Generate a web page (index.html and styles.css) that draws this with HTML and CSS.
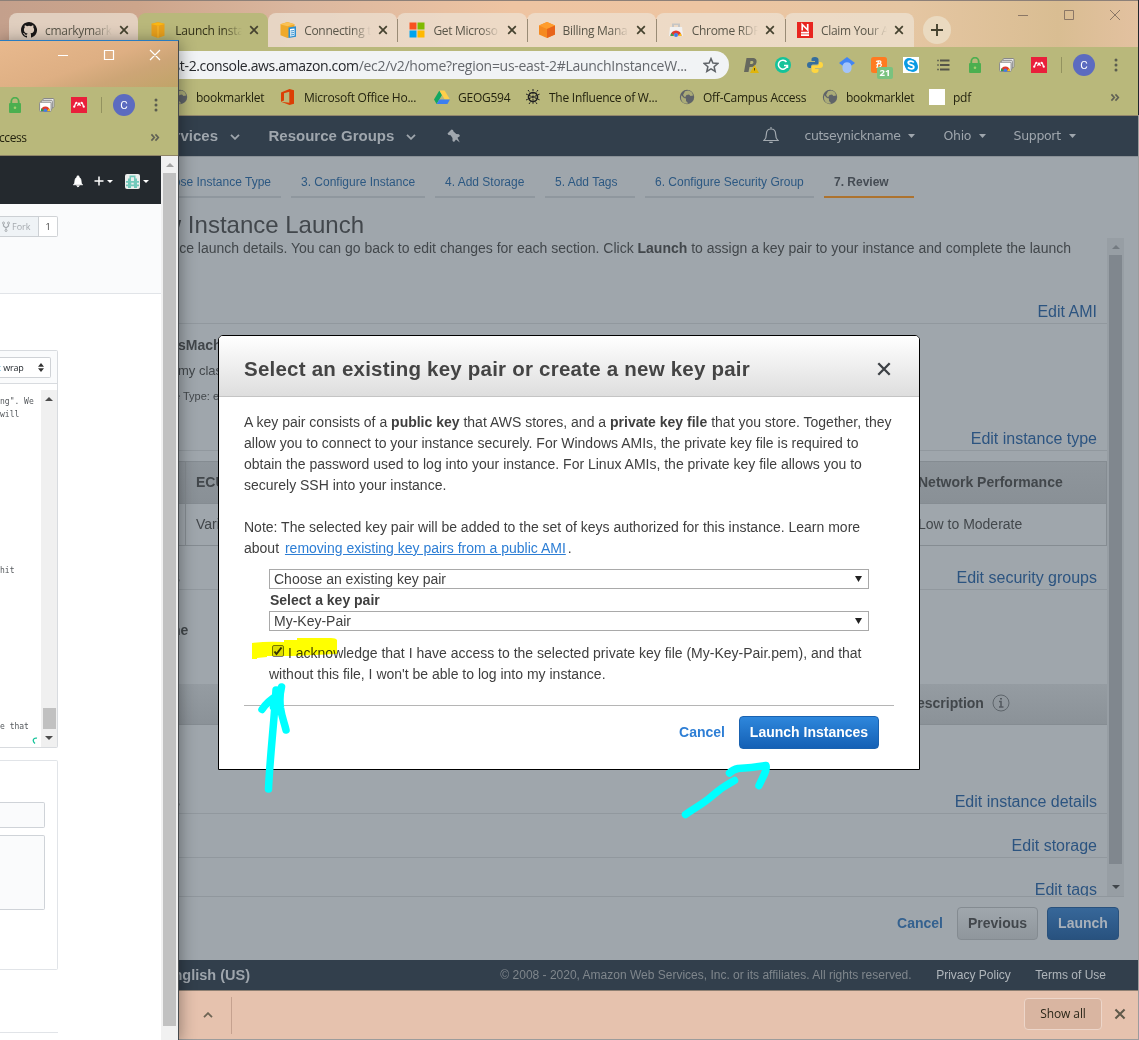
FILE: index.html
```html
<!DOCTYPE html>
<html lang="en">
<head>
<meta charset="utf-8">
<title>Launch instance wizard</title>
<link rel="stylesheet" href="styles.css">
</head>
<body>
<svg width="0" height="0" class="defs">
  <defs>
    <symbol id="i-lock" viewBox="0 0 16 16"><path d="M4.3 7V4.6a3.7 3.9 0 0 1 7.4 0V7" fill="none" stroke="#4caf50" stroke-width="1.8"/><rect x="2" y="6" width="12" height="10" rx="1" fill="#4caf50"/><circle cx="8" cy="10.8" r="1.3" fill="#a5d06f"/></symbol>
    <symbol id="i-rdp" viewBox="0 0 16 16"><rect x="4" y="1.5" width="11" height="9" rx="1" fill="#eee" stroke="#888"/><rect x="2.3" y="3.3" width="11" height="9" rx="1" fill="#eee" stroke="#888"/><rect x=".6" y="5.2" width="11.5" height="9.3" rx="1" fill="#fff" stroke="#888"/><path d="M1.8 14a4.6 4.6 0 0 1 9.2 0h-3a1.6 1.6 0 0 0-3.2 0z" fill="#e33b2e"/><path d="M1.8 14a4.6 4.6 0 0 1 1-2.9l2 2.9z" fill="#2aa14b"/><path d="M11 14a4.6 4.6 0 0 0-1-2.8L8 14z" fill="#fbc116"/><circle cx="6.4" cy="13.2" r="1.7" fill="#3f7ee8"/></symbol>
    <symbol id="i-mendeley" viewBox="0 0 16 16"><path fill="#e9203b" d="M0 0h16v16H0z"/><path d="M3.500 9.500C4.300 9 3.800 6 5.200 6M12.500 9.500c-.8-.5-.3-3.500-1.700-3.500M6.700 9C6.900 7.500 7 6.800 8 6.800S9.100 7.500 9.300 9" fill="none" stroke="#fff" stroke-width="1.300"/><circle cx="8" cy="6.800" r="1.300" fill="#fff"/><circle cx="5.400" cy="5.800" r="1.100" fill="#fff"/><circle cx="10.600" cy="5.800" r="1.100" fill="#fff"/><circle cx="3.200" cy="9.700" r="1.100" fill="#fff"/><circle cx="12.800" cy="9.700" r="1.100" fill="#fff"/></symbol>
    <symbol id="i-globe" viewBox="0 0 16 16"><circle cx="8" cy="8" r="7.200" fill="#5f6368"/><path d="M2.300 6.300 5 9l2 .5v2.600l1.600 1.500.2 1.200C4 15 1 11.500 2.300 6.300zM6 2.200l3.400-.8c3 .6 4.300 2.600 4.700 5.100L11.500 7 10 5.500 7.500 6 6 8.400 4 6z" fill="#b9b87b" opacity=".85"/></symbol>
    <symbol id="i-x" viewBox="0 0 10 10"><path d="m1.200 1.200 7.600 7.600m0-7.600L1.200 8.800" fill="none" stroke="currentColor" stroke-width="1.700"/></symbol>
    <symbol id="i-more" viewBox="0 0 10 10"><path d="m1 1.500 3.200 3.500L1 8.500M5.500 1.500 8.700 5 5.500 8.500" fill="none" stroke="currentColor" stroke-width="1.800"/></symbol>
    <symbol id="i-chev" viewBox="0 0 10 6"><path d="m1 .8 4 4 4-4" fill="none" stroke="currentColor" stroke-width="1.800"/></symbol>
    <symbol id="i-tri" viewBox="0 0 8 4" preserveAspectRatio="none"><path d="M0 0h8L4 4z" fill="currentColor"/></symbol>
  </defs>
</svg>
<div class="desktop">

<section class="browser">
  <header class="tabstrip">
    <div class="tab"><svg class="fav" viewBox="0 0 16 16"><path fill="#191717" d="M8 0C3.580 0 0 3.580 0 8c0 3.540 2.290 6.530 5.470 7.590.4.070.55-.17.55-.38 0-.19-.01-.82-.01-1.490-2.010.37-2.530-.49-2.690-.94-.09-.23-.48-.94-.82-1.130-.28-.15-.68-.52-.01-.53.63-.01 1.080.58 1.230.82.720 1.210 1.870.87 2.330.66.070-.52.28-.87.51-1.070-1.780-.2-3.640-.89-3.640-3.950 0-.87.31-1.590.82-2.150-.08-.2-.36-1.020.080-2.120 0 0 .67-.21 2.200.82a7.600 7.600 0 0 1 4 0c1.530-1.040 2.200-.82 2.200-.82.44 1.100.16 1.920.08 2.120.51.560.82 1.270.82 2.150 0 3.070-1.870 3.750-3.650 3.950.29.250.54.730.54 1.480 0 1.070-.01 1.930-.01 2.200 0 .21.15.46.55.38A8 8 0 0 0 8 0z"/></svg><span class="t">cmarkymark/</span><svg class="tx"><use href="#i-x"/></svg></div>
    <div class="tab on"><svg class="fav" viewBox="0 0 16 16"><path d="m8 0 6.500 1.800v12L8 16l-6.500-2.200v-12z" fill="#eaa11c"/><path d="m1 2 7 1.700L15 2 8 .5z" fill="#fcb913"/><path d="M8 4v12" stroke="#fcbd30"/></svg><span class="t">Launch insta</span><svg class="tx"><use href="#i-x"/></svg></div>
    <div class="tab"><svg class="fav" viewBox="0 0 16 16"><path d="m7.500 0 7 2.200v11L7.500 16 .5 13.200v-11z" fill="#efa92b"/><path d="m0 2.300 7.500 2 7.500-2-7.500-2z" fill="#fbc255"/><path d="m8.500 5.500 7.500-1.200v10.400L8.500 16z" fill="#2e8fd0"/><path d="m10 7 4.500-.6v7.400L10 14.500z" fill="#fff"/><path d="m10.500 9 3.500-.4m-3.500 2.400 3.500-.4m-3.500 2.400 3.500-.4" stroke="#2e8fd0"/></svg><span class="t">Connecting t</span><svg class="tx"><use href="#i-x"/></svg></div>
    <div class="tab sep"><svg class="fav" viewBox="0 0 16 16"><path fill="#f8521f" d="M.5.500h7v7h-7z"/><path fill="#7fba00" d="M8.500.500h7v7h-7z"/><path fill="#00a4ef" d="M.5 8.500h7v7h-7z"/><path fill="#ffb900" d="M8.500 8.500h7v7h-7z"/></svg><span class="t">Get Microso</span><svg class="tx"><use href="#i-x"/></svg></div>
    <div class="tab sep"><svg class="fav" viewBox="0 0 16 16"><path fill="#f58a21" d="M8 0 0 3.500v9L8 16l8-3.500v-9z"/><path fill="#ff9d2e" d="m8 0 8 3.500L8 7 0 3.500z"/><path fill="#e8641b" d="m8 7 8-3.500v9L8 16z"/></svg><span class="t">Billing Mana</span><svg class="tx"><use href="#i-x"/></svg></div>
    <div class="tab sep"><svg class="fav" viewBox="0 0 16 16"><path fill="#c5c5c5" d="M4 1.500h8V5h-2V3H6v2H4z"/><path fill="#f1f1f1" d="M2 5h12l1 9H1z"/><path fill="#e23a2e" d="M2.500 14a5.500 5.500 0 0 1 11 0h-3a2.500 2.500 0 0 0-5 0z" /><path fill="#2fa84f" d="M2.500 14a5 5 0 0 1 1-3L6 14z"/><path fill="#fbc116" d="M13.500 14a5 5 0 0 0-1-3L10 14z"/><circle cx="8" cy="13" r="2" fill="#3f7ee8"/></svg><span class="t">Chrome RDP</span><svg class="tx"><use href="#i-x"/></svg></div>
    <div class="tab sep"><svg class="fav" viewBox="0 0 16 16"><path fill="#e8251f" d="M0 0h16v16H0z"/><path d="M5.200 8.500v-6l5.500 5.500V2M4 10.700h8M4 13.200h8" fill="none" stroke="#fff" stroke-width="1.700"/></svg><span class="t">Claim Your A</span><svg class="tx"><use href="#i-x"/></svg></div>
    <div class="newtab"><svg viewBox="0 0 12 12"><path d="M6 0v12M0 6h12" stroke="#45422f" stroke-width="1.900"/></svg></div>
    <svg class="winctl" viewBox="0 0 104 12"><path d="M0 6.500h10M46.500 1.500h9v9h-9zM92 1l10 10m0-10L92 11" fill="none" stroke="#8b7766"/></svg>
  </header>

  <div class="toolbar">
    <div class="omni"><span><b>us-east-2.console.aws.amazon.com</b>/ec2/v2/home?region=us-east-2#LaunchInstanceW...</span><svg class="star" viewBox="0 0 16 16"><path d="m8 1.600 1.900 4.500 4.900.4-3.700 3.200 1.100 4.700L8 11.900l-4.200 2.500 1.100-4.700L1.200 6.500l4.900-.4z" fill="none" stroke="#5f6368" stroke-width="1.500"/></svg></div>
    <div class="exts">
      <i><svg viewBox="0 0 16 16"><path d="M1 15 3.500 1H9c4 0 5 2 4.500 4.500S11 10 8 10H6.500l-1 5z" fill="#66685e"/><path d="M7.500 4h1.800c1.500 0 1.500 3-.5 3H7z" fill="#b9b87b"/><path d="m11.500 8 4.500 8H7z" fill="#e0b50c"/><path d="M11.500 11v2.500" stroke="#5b4a10"/></svg></i>
      <i><svg viewBox="0 0 16 16"><circle cx="8" cy="8" r="8" fill="#15c39a"/><path d="M11.500 5A4.500 4.500 0 1 0 12 9.500M9 8.500h3.500V11" fill="none" stroke="#fff" stroke-width="1.500"/></svg></i>
      <i><svg viewBox="0 0 16 16"><path d="M8 0C5 0 4.500 1 4.500 2.500V4H8v1H3C1 5 0 6 0 8s1 3 2.500 3H4V9.500C4 8 5 7.500 6.500 7.500H10c1 0 1.500-1 1.500-2v-3C11.500 1 10 0 8 0z" fill="#346d9d"/><path d="M8 16c3 0 3.500-1 3.500-2.500V12H8v-1h5c2 0 3-1 3-3s-1-3-2.500-3H12v1.500C12 8 11 8.500 9.500 8.500H6c-1 0-1.500 1-1.500 2v3C4.500 15 6 16 8 16z" fill="#ffd63f"/></svg></i>
      <i><svg viewBox="0 0 16 16"><path d="m8 0 8 6-8 6-8-6z" fill="#4285f4"/><path d="M3.500 8.500a4.700 4.700 0 0 1 9 0v3a4.500 4.500 0 0 1-9 0z" fill="#a3c4fa"/></svg></i>
      <i class="honey"><svg viewBox="0 0 16 16"><rect width="16" height="16" rx="2.500" fill="#ff7a21"/><path d="M5 4.500c2-1 5-1 5 .5S7 6.500 6.500 7C10 6 11 7.500 10 9S7 10.500 6 10.500L7.500 4" fill="none" stroke="#fff" stroke-width="1.200"/></svg><em>21</em></i>
      <i><svg viewBox="0 0 16 16"><path fill="#fff" d="M0 0h16v16H0z"/><rect x="1" y="1" width="10" height="10" rx="5" fill="#0a9be3"/><rect x="5" y="5" width="10" height="10" rx="5" fill="#0a9be3"/><circle cx="8" cy="8" r="6.300" fill="#0a9be3"/><path d="M10.800 5.500C9 3.500 5 4 5.200 6c.3 2.200 5.600 1.500 5.600 3.900C10.800 12.300 7 12.400 5 10.300" fill="none" stroke="#fff" stroke-width="1.800"/></svg></i>
      <i><svg viewBox="0 0 16 16"><path d="M5 3.500h9.500M5 8h9.500M5 12.500h9.500" stroke="#55554a" stroke-width="2"/><path d="M2 3.500h2M2 8h2M2 12.500h2" stroke="#6c6c58" stroke-width="1.500"/></svg></i>
      <i><svg><use href="#i-lock"/></svg></i><i><svg><use href="#i-rdp"/></svg></i><i><svg><use href="#i-mendeley"/></svg></i>
      <u></u><b>C</b><svg class="dots" viewBox="0 0 4 14"><circle cx="2" cy="2" r="1.500"/><circle cx="2" cy="7" r="1.500"/><circle cx="2" cy="12" r="1.500"/></svg>
    </div>
  </div>

  <nav class="bookmarks">
    <a class="w108"><svg><use href="#i-globe"/></svg>bookmarklet</a>
    <a class="w154"><svg viewBox="0 0 16 16"><path fill="#dc3e05" d="M1 3.500 9.500 0 14 1.300v13.400L9.500 16 1 12.800l8.300 1V2.800L4 4.200v7.400l-3 1.200z"/></svg>Microsoft Office Ho...</a>
    <a class="w91"><svg viewBox="0 0 16 16"><path fill="#11a861" d="M5.400 1.500 0 10.500 2.600 15 8 6z"/><path fill="#ffcf4a" d="M5.400 1.500h5.200l5.400 9h-5.300z"/><path fill="#3d7ff0" d="M5.300 10.500H16L13.400 15H2.600z"/></svg>GEOG594</a>
    <a class="w154"><svg viewBox="0 0 16 16"><circle cx="8" cy="8" r="4.500" fill="none" stroke="#222" stroke-width="1.600"/><path d="M8 0v16M1 5l14 6M1 11l14-6M3 1l3 4m7-4-3 4M4 15l2-3m6 3-2-3M5.500 8h5" stroke="#222" fill="none" stroke-dasharray="2 1.200"/></svg>The Influence of W...</a>
    <a class="w143"><svg><use href="#i-globe"/></svg>Off-Campus Access</a>
    <a class="w107"><svg><use href="#i-globe"/></svg>bookmarklet</a>
    <a class="pdf"><i></i>pdf</a>
    <svg class="more"><use href="#i-more"/></svg>
  </nav>

  <nav class="awsnav">
    <span class="n1">Services<svg><use href="#i-chev"/></svg></span>
    <span class="n2">Resource Groups<svg><use href="#i-chev"/></svg></span>
    <svg class="pin" viewBox="0 0 14 14"><path d="m.5 4.500 4-4L6 1l.5 1.500L9.300 5l2.700.3L13 7l-2.500 1.800 2.300 4.700L9 10.500 7 13 5.500 12V9L3.600 6.200 1.500 6z" fill="#a0a7ae"/></svg>
    <svg class="bell" viewBox="0 0 16 17"><path d="M1 13.500h14c-2-1.800-2.400-3.500-2.400-6.500C12.600 3.600 10.500 2 8 2S3.400 3.600 3.400 7c0 3-.4 4.700-2.400 6.500zM8 0v2M6.300 15.300h3.400" fill="none" stroke="#a3aab0" stroke-width="1.200"/></svg>
    <span class="n3">cutseynickname<svg><use href="#i-tri"/></svg></span>
    <span class="n4">Ohio<svg><use href="#i-tri"/></svg></span>
    <span class="n5">Support<svg><use href="#i-tri"/></svg></span>
  </nav>

  <main class="wizard">
    <ol class="steps">
      <li class="s2">2. Choose Instance Type</li><li class="s3">3. Configure Instance</li><li class="s4">4. Add Storage</li><li class="s5">5. Add Tags</li><li class="s6">6. Configure Security Group</li><li class="s7">7. Review</li>
    </ol>
    <h1>Step 7: Review Instance Launch</h1>
    <div class="scroller">
      <div class="content">
        <p class="lead">Please review your instance launch details. You can go back to edit changes for each section. Click <b>Launch</b> to assign a key pair to your instance and complete the launch</p>
        <div class="sec a">Edit AMI</div>
        <div class="ami"><b>sMach</b><span>my clas</span><small>e Type: e</small></div>
        <div class="sec b">Edit instance type</div>
        <div class="table">
          <div class="tr th"><span>ECUs</span><span>Network Performance</span></div>
          <div class="tr"><span>Variable</span><span>Low to Moderate</span></div>
        </div>
        <div class="sec c"><span>s</span>Edit security groups</div>
        <div class="name">ne</div>
        <div class="rules">escription <svg viewBox="0 0 18 18"><circle cx="9" cy="9" r="8" fill="none" stroke="#5e656b"/><path d="M7 7.500h2V13M7 13h4.500M8 4.800h2" fill="none" stroke="#555b61" stroke-width="1.600"/></svg></div>
        <div class="sec d"><span>s</span>Edit instance details</div>
        <div class="sec e">Edit storage</div>
        <div class="sec f">Edit tags</div>
      </div>
      <div class="sbar"><svg class="up"><use href="#i-tri"/></svg><i></i><svg><use href="#i-tri"/></svg></div>
    </div>
    <div class="actions"><a>Cancel</a><button class="prev">Previous</button><button class="launch">Launch</button></div>
  </main>
  <footer class="awsfoot"><b>English (US)</b><span>© 2008 - 2020, Amazon Web Services, Inc. or its affiliates. All rights reserved.</span><a>Privacy Policy</a><a>Terms of Use</a></footer>
  <div class="downloads"><svg class="chev"><use href="#i-chev"/></svg><i></i><button>Show all</button><svg class="dx"><use href="#i-x"/></svg></div>
</section>
<div class="edge"></div>

<section class="modal">
  <header><h2>Select an existing key pair or create a new key pair</h2><svg viewBox="0 0 14 14"><path d="m1.300 1.300 11.400 11.400m0-11.400L1.300 12.700" stroke="#3d4145" stroke-width="2.300"/></svg></header>
  <div class="mbody">
    <p>A key pair consists of a <b>public key</b> that AWS stores, and a <b>private key file</b> that you store. Together, they<br>allow you to connect to your instance securely. For Windows AMIs, the private key file is required to<br>obtain the password used to log into your instance. For Linux AMIs, the private key file allows you to<br>securely SSH into your instance.</p>
    <p>Note: The selected key pair will be added to the set of keys authorized for this instance. Learn more<br>about <a>removing existing key pairs from a public AMI</a>.</p>
    <div class="form">
      <div class="select">Choose an existing key pair<svg><use href="#i-tri"/></svg></div>
      <label>Select a key pair</label>
      <div class="select">My-Key-Pair<svg><use href="#i-tri"/></svg></div>
      <div class="ack"><span class="cb"><svg viewBox="0 0 10 10"><path d="m1.500 5.500 2 2.500L8.500 1.500" fill="none" stroke="#333" stroke-width="2"/></svg></span>I acknowledge that I have access to the selected private key file (My-Key-Pair.pem), and that<br>without this file, I won't be able to log into my instance.</div>
    </div>
    <div class="mfoot"><a>Cancel</a><button>Launch Instances</button></div>
  </div>
</section>

<section class="front">
  <div class="ftitle"><svg viewBox="0 0 104 12"><path d="M0 6.500h10M46.500 1.500h9v9h-9zM92 1l10 10m0-10L92 11" fill="none" stroke="#fff" stroke-width="1.200"/></svg></div>
  <div class="exts fexts">
    <i><svg><use href="#i-lock"/></svg></i><i><svg><use href="#i-rdp"/></svg></i><i><svg><use href="#i-mendeley"/></svg></i>
    <u></u><b>C</b><svg class="dots" viewBox="0 0 4 14"><circle cx="2" cy="2" r="1.500"/><circle cx="2" cy="7" r="1.500"/><circle cx="2" cy="12" r="1.500"/></svg>
  </div>
  <div class="fmarks"><span>ccess</span><svg class="more"><use href="#i-more"/></svg></div>
  <div class="fpage">
    <div class="gh">
      <div class="ghbar">
        <svg class="gbell" viewBox="0 0 12 14"><path d="M1 10.500c1.500-1 1.500-2 1.700-4.500C3 3.500 4.300 2.500 6 2.500S9 3.500 9.300 6c.2 2.500.2 3.500 1.700 4.500zM5 1h2v2H5zM4.500 11.500h3L6 13z" fill="#fff" stroke="#fff" stroke-width=".8"/></svg>
        <svg class="plus" viewBox="0 0 10 10"><path d="M5 .5v9M.5 5h9" stroke="#fff" stroke-width="1.500"/></svg>
        <svg class="tri"><use href="#i-tri"/></svg>
        <svg class="ava" viewBox="0 0 15 15"><rect width="15" height="15" rx="2" fill="#eceeed"/><path d="M4.500 1.500h6v3h-6zM3 4.500h3v9.500H3zm6 0h3v9.500H9zM6 7h3v5H6zM1 7h13v1.800H1zm0 3.500h13v1.700H1z" fill="#72c9bb"/><path d="M6 3.200h3v2H6zM6.300 8.800h2.400v1.700H6.300z" fill="#eceeed"/></svg>
        <svg class="tri"><use href="#i-tri"/></svg>
      </div>
      <div class="repo"><span class="fork"><svg viewBox="0 0 8 11"><path d="M1.500 3v2L4 7l2.500-2V3M4 7v2" fill="none" stroke="#a5aaaf" stroke-width="1.200"/><g fill="#fafbfc" stroke="#a5aaaf"><circle cx="1.500" cy="2" r="1"/><circle cx="6.500" cy="2" r="1"/><circle cx="4" cy="9.500" r="1"/></g></svg>Fork</span><span class="cnt">1</span></div>
      <div class="editor">
        <div class="ehead"><span class="wrap"><span class="c">t</span>&nbsp;wrap<svg viewBox="0 0 6 9"><path d="M0 3.700h6L3 0zM0 5.300h6L3 9z" fill="#333"/></svg></span></div>
        <div class="ebody">
          <div class="code"><pre>ng". We
will</pre><pre class="p2">hit</pre><pre class="p3">e that</pre><svg class="gram" viewBox="0 0 6 8"><path d="M5 1.200C1 .5 0 4 3 6.500" fill="none" stroke="#15c39a" stroke-width="1.300"/></svg></div>
          <div class="esb"><svg class="up"><use href="#i-tri"/></svg><i></i><svg><use href="#i-tri"/></svg></div>
        </div>
      </div>
      <div class="commit"><div class="in1"></div><div class="in2"></div></div>
      <div class="rule"></div>
    </div>
    <div class="fsb"><svg class="up"><use href="#i-tri"/></svg><i></i></div>
  </div>
</section>

<svg class="marker" viewBox="0 0 1139 1040" width="1139" height="1040">
  <path d="M252 643q14-2 32-1v-2h13v-2h34q5 0 6 2v14l-45 2h-25v1l-10 1v1h-5z"/>
</svg>
<svg class="ink" viewBox="0 0 1139 1040" width="1139" height="1040">
  <path d="M281.500 687c-2 8-2 13-1 21 1.500 10 4 15 5.500 22M262 709.500q6-9 17-15M276 690c-2 34-6 66-7.500 99M273.500 707l3-14"/>
  <path d="M685.500 814.500C696 807 703 804 712 796Q722 787 734.500 780.500M729.500 773Q733 769.500 738 768.500C748 768 757 767 766 765.500Q767 769 763.500 776L759 785.500"/>
</svg>
</div>
</body>
</html>
```
FILE: styles.css
```css
* { box-sizing: border-box; }
body { margin: 0; overflow: hidden; font-family: "Liberation Sans", Arial, sans-serif; color: #444; }
.defs { position: absolute; }
.desktop { position: relative; width: 1139px; height: 1040px; overflow: hidden; background: #9c9c9c; }
svg { display: block; flex: none; }
button { font: inherit; margin: 0; padding: 0; }
.browser { position: absolute; left: 0; top: 0; width: 1138px; height: 1039px; display: flex; flex-direction: column; }
.edge { position: absolute; left: 1138px; top: 0; width: 1px; height: 115px; background: #22262c; }

/* tab strip */
.tabstrip { height: 47px; flex: none; display: flex; align-items: flex-start; padding: 12px 0 0 9px; border-top: 1px solid #8d8078; position: relative;
  background: linear-gradient(90deg, #c4a08c 0, #cda58b 12%, #dbb79f 26%, #eec4a2 45%, #edc5a2 62%, #e5c6a2 80%, #d9bd92 93%, #e3c1a0 100%); }
.tab { width: 129.200px; height: 34px; flex: none; display: flex; align-items: center; padding-left: 12px; border-radius: 8px 8px 0 0; background: rgba(238,229,215,.68); position: relative;
  font: 12px "Open Sans", sans-serif; color: #5a5649; }
.tab.on { background: #b9b87b; color: #333118; width: 130px; }
.tab.sep { border-left: 1px solid #a0907c; border-image: linear-gradient(transparent 20%, #998b76 20%, #998b76 82%, transparent 82%) 1; padding-left: 11px; }
.fav { width: 16px; height: 16px; margin-right: 8px; }
.t { width: 66.500px; overflow: hidden; white-space: nowrap; letter-spacing: -.3px; -webkit-mask-image: linear-gradient(90deg, #000 72%, transparent); mask-image: linear-gradient(90deg, #000 72%, transparent); }
.on .t { letter-spacing: -.2px; margin-left: 1px; }
.tx { width: 10px; height: 10px; margin-left: 7px; color: #45422f; }
.newtab { width: 28px; height: 28px; border-radius: 50%; background: #eadac0; margin: 3px 0 0 9px; display: grid; place-items: center; }
.newtab svg { width: 12px; height: 12px; }
.winctl { width: 104px; height: 12px; margin: -4px 0 0 67px; }

/* toolbar */
.toolbar { height: 36px; flex: none; background: #b9b87b; display: flex; align-items: center; }
.omni { width: 729px; height: 28px; border-radius: 0 14px 14px 0; background: #f1f3f5; display: flex; align-items: center; justify-content: flex-end; padding-right: 10px; font: 14px "Open Sans", sans-serif; color: #65686d; white-space: nowrap; letter-spacing: -.28px; }
.omni b { font-weight: 400; color: #26282c; letter-spacing: -.35px; }
.star { width: 16px; height: 16px; margin-left: 16px; }
.exts { display: flex; align-items: center; }
.toolbar .exts { margin-left: 6px; }
.exts i { width: 32px; height: 28px; display: grid; place-items: center; flex: none; position: relative; }
.exts i svg { width: 16px; height: 16px; }
.exts u { width: 1px; height: 16px; background: #93925f; margin: 0 11px 0 6px; }
.exts b { width: 22px; height: 22px; border-radius: 50%; background: #5c6bc0; color: #fff; font: 11.500px/22px Roboto, sans-serif; text-align: center; }
.dots { width: 4px; height: 14px; margin-left: 19px; fill: #5b5d50; }
.honey em { position: absolute; left: 14px; top: 16px; width: 16px; height: 12px; background: #7ac27f; border-radius: 2px; color: #fff; font: bold 9.500px/12px "Open Sans", sans-serif; text-align: center; }
.bookmarks { height: 33px; flex: none; background: #b9b87b; border-bottom: 1px solid #92866c; display: flex; align-items: center; padding: 0 0 4px 172px; font: 12px "Open Sans", sans-serif; letter-spacing: -.25px; color: #24230f; white-space: nowrap; }
.bookmarks a { display: flex; align-items: center; flex: none; gap: 8px; }
.bookmarks a svg { width: 16px; height: 16px; }
.w108 { width: 108px; } .w154 { width: 154px; } .w91 { width: 91px; } .w143 { width: 143px; } .w107 { width: 107px; }
.bookmarks .pdf { width: 181px; }
.pdf i { width: 16px; height: 16px; background: #fff; }
.more { width: 10px; height: 9px; color: #5f6054; }

/* console navigation */
.awsnav { height: 40px; flex: none; background: #323f4c; display: flex; align-items: center; color: #9fa6ad; font: bold 15px "Liberation Sans", sans-serif; padding-bottom: 1px; }
.awsnav span { display: flex; align-items: center; flex: none; white-space: nowrap; }
.awsnav .n1 { width: 240px; justify-content: flex-end; gap: 12px; }
.n1 svg, .n2 svg { width: 10px; height: 6px; margin-top: 3px; }
.awsnav .n2 { margin-left: 28.500px; gap: 12px; width: 180px; }
.pin { width: 14px; height: 14px; margin-left: -2px; }
.bell { width: 16px; height: 17px; margin-left: 302px; }
.awsnav .n3, .awsnav .n4, .awsnav .n5 { font: 400 12.500px "DejaVu Sans", sans-serif; gap: 8px; letter-spacing: -.45px; }
.n3 svg, .n4 svg, .n5 svg { width: 7px; height: 4px; }
.awsnav .n3 { margin-left: 26px; width: 139px; }
.awsnav .n4 { width: 70px; }
.awsnav .n4, .awsnav .n5 { letter-spacing: -.3px; }

/* wizard page */
.wizard { height: 804px; flex: none; background: #9fa6ac; display: flex; flex-direction: column; border-top: 1px solid #8a9197; }
.steps { list-style: none; margin: 0; padding: 10px 0 0; height: 42px; display: flex; gap: 10px; font-size: 12px; color: #2c5882; flex: none; }
.steps li { height: 31px; line-height: 30px; border-bottom: 2px solid #8f979e; padding: 0 10px; white-space: nowrap; flex: none; }
.steps .s2 { width: 281px; text-align: right; } .s3 { width: 134px; } .s4 { width: 100px; } .s5 { width: 90px; } .s6 { width: 169px; }
.steps .s7 { width: 90px; border-color: #ad732f; color: #454c54; font-weight: bold; }
h1 { margin: 0; width: 364px; text-align: right; font-weight: 400; font-size: 24px; line-height: 31px; padding-top: 10px; height: 39px; flex: none; white-space: nowrap; color: #42474c; }
.scroller { height: 659px; flex: none; display: flex; margin-right: 14px; border-bottom: 1px solid #90979d; }
.content { width: 1107px; overflow: hidden; color: #42474b; font-size: 14px; }
.lead { margin: 0; padding: 0 36px 0 0; height: 21px; line-height: 20px; font-size: 14px; display: block; white-space: nowrap; direction: rtl; unicode-bidi: plaintext; text-align: right; }
.sec { border-bottom: 1px solid #91989e; font-size: 16px; color: #2c5480; display: flex; align-items: flex-end; justify-content: flex-end; padding: 0 10px 2px 172px; }
.sec span { margin-right: auto; color: #42474b; }
.a { height: 65px; } .ami { height: 124px; }
.ami { display: flex; flex-direction: column; padding: 10px 0 0 178px; line-height: 22px; }
.ami b { font-size: 14px; } .ami span { line-height: 30px; height: 28px; font-size: 13px; } .ami small { font-size: 11px; line-height: 24px; margin-left: -4px; }
.sec.b { height: 0; overflow: visible; }
.table { margin: 10px 0 0; border: 1px solid #858c92; font-size: 14px; height: 85px; }
.tr { height: 40px; display: flex; align-items: center; }
.th { background: linear-gradient(#8f969c, #899096); border-bottom: 1px solid #858c92; font-weight: bold; height: 42px; padding-bottom: 1px; }
.tr span:first-child { margin-left: 184px; width: 733px; padding-left: 10px; border-left: 1px solid #858c92; line-height: 41px; }
.sec.c { height: 44px; }
.name { height: 94px; padding: 32px 0 0 172px; font-weight: bold; width: 300px; }
.rules { height: 41px; background: linear-gradient(#959ca2, #8b9298); border-bottom: 1px solid #858c92; display: flex; align-items: center; gap: 8px; padding: 0 0 2px 917px; font-weight: bold; }
.rules svg { width: 18px; height: 18px; }
.sec.d { height: 89px; }
.sec.e { height: 44px; }
.sec.f { height: 44px; border: 0; padding-bottom: 3px; }
.sbar { width: 17px; background: #979ea4; display: flex; flex-direction: column; align-items: center; padding-top: 7px; height: 658px; }
.sbar svg { width: 8px; height: 4px; color: #41464b; margin-top: 21px; }
.sbar svg.up { transform: rotate(180deg); color: #747b81; margin: 0; }
.sbar i { width: 13px; height: 609px; background: #80878e; margin-top: 6px; flex: none; }
.actions { display: flex; justify-content: flex-end; align-items: center; padding: 0 19px 0 0; height: 53px; font-weight: bold; font-size: 14px; }
.actions a { color: #34618f; margin-right: 14px; }
.actions button { height: 33px; border-radius: 4px; padding-bottom: 2px; }
.actions a { padding-bottom: 1px; }
.prev { width: 81px; border: 1px solid #848b91; background: linear-gradient(#a0a7ad, #8f969c); color: #42474c; margin-right: 9px; }
.launch { width: 72px; border: 1px solid #29517c; background: linear-gradient(#376799, #28527f); color: #a9b1ba; }
.awsfoot { height: 30px; flex: none; background: #323f4c; display: flex; align-items: center; justify-content: flex-end; padding-right: 32px; font-size: 12px; color: #7f868c; white-space: nowrap; }
.awsfoot b { font-size: 14.500px; color: #9fa6ad; margin-right: auto; width: 250px; text-align: right; }
.awsfoot a { color: #b0b6bb; margin-left: 24.500px; }
.downloads { height: 49px; flex: none; background: #e6c2ae; border-top: 1px solid #8f8073; display: flex; align-items: center; }
.chev { width: 10px; height: 6px; transform: rotate(180deg); margin-left: 203px; color: #6d6454; }
.downloads i { width: 1px; height: 37px; background: #c5a18f; margin-left: 18px; }
.downloads button { margin-left: auto; width: 78px; height: 32px; border: 1px solid #edd6ca; background: #d9b5a1; border-radius: 4px; font: 12px "Open Sans", sans-serif; letter-spacing: -.1px; color: #2a2618; margin-right: 12px; padding-bottom: 2px; margin-bottom: 2px; }
.dx { width: 12px; height: 12px; margin: 0 12px 2px 0; color: #5f594a; }

/* key pair dialog */
.modal { position: absolute; left: 218px; top: 335px; width: 702px; height: 435px; border: 1px solid #000; border-radius: 5px 5px 0 0; background: #fff; }
.modal header { height: 61px; border-bottom: 1px solid #c4c4c4; border-radius: 4px 4px 0 0; background: linear-gradient(#fff, #dedede); display: flex; align-items: center; justify-content: space-between; padding: 6px 28px 0 25px; }
.modal header svg { width: 14px; height: 14px; }
h2 { margin: 0; font-size: 20.500px; letter-spacing: .22px; white-space: nowrap; }
.mbody { padding: 15px 25px 0; font-size: 14px; line-height: 21px; white-space: nowrap; color: #3f3f3f; }
.mbody p { margin: 0 0 21px; }
.mbody p + p { margin: 0 0 10px; }
.mbody p a { color: #2d7ed5; text-decoration: underline; margin: 0 2px; }
.form { padding-left: 25px; }
.select { width: 600px; height: 20px; border: 1px solid #a9a9a9; line-height: 19px; padding: 0 6px 0 4px; display: flex; justify-content: space-between; align-items: center; }
.select svg { width: 7px; height: 6px; color: #222; }
.form label { display: block; font-weight: bold; height: 22px; line-height: 22px; padding-left: 1px; }
.ack { padding-top: 12px; }
.cb { display: inline-block; width: 12px; height: 12px; border: 1px solid #777; border-radius: 2px; background: #ddd; margin: 0 4px 0 3px; vertical-align: 1px; }
.cb svg { width: 10px; height: 10px; }
.mfoot { width: 650px; margin-top: 20px; border-top: 1px solid #b5b5b5; padding: 10px 15px 0 0; display: flex; justify-content: flex-end; align-items: center; font-weight: bold; }
.mfoot a { color: #2d7ed5; margin-right: 14px; }
.mfoot button { width: 140px; height: 33px; border: 1px solid #1a62b0; border-radius: 4px; color: #fff; background: linear-gradient(#2e87dc, #1460b5); }

/* overlapping window */
.front { position: absolute; left: -1px; top: 40px; width: 180px; height: 1001px; border: 1px solid #45494c; border-top-color: #297cc0; background: #fff; box-shadow: 0 2px 16px rgba(0,0,0,.42); overflow: hidden; display: flex; flex-direction: column; }
.ftitle { height: 46px; flex: none; background: linear-gradient(160deg, #e8b98e, #deaf83 50%, #cda576 72%, #c0a468); padding: 8px 0 0 58px; }
.ftitle svg { width: 104px; height: 12px; }
.fexts { height: 36px; flex: none; background: #b9b87b; }
.fexts i:first-child { margin-left: -1px; }
.fmarks { height: 33px; flex: none; background: #b9b87b; border-bottom: 1px solid #8f8467; display: flex; align-items: center; justify-content: space-between; padding: 0 18px 4px 0; font: 12px "Open Sans", sans-serif; letter-spacing: -.4px; color: #24230f; }
.fmarks span { margin-left: -1px; }
.fpage { display: flex; height: 885px; }
.gh { width: 161px; }
.ghbar { height: 48px; background: #24292e; display: flex; align-items: center; padding: 2px 0 0 72px; }
.gbell { width: 12px; height: 13px; } .plus { width: 10px; height: 10px; margin-left: 10px; }
.tri { width: 6px; height: 3px; color: #fff; margin-left: 3px; }
.ava { width: 15px; height: 15px; margin-left: 12px; } .ava + .tri { margin-left: 3px; }
.repo { height: 90px; background: #fafbfc; border-bottom: 1px solid #e1e4e8; display: flex; align-items: flex-start; padding-top: 12px; }
.fork { width: 39px; height: 21px; border: 1px solid #ccd0d4; border-left: 0; background: #eff3f6; display: flex; align-items: center; padding-left: 2px; gap: 2px; font: 9px/19px "Open Sans", sans-serif; color: #a5aaaf; }
.fork svg { width: 8px; height: 11px; }
.cnt { width: 19px; height: 21px; border: 1px solid #d0d3d6; border-left: 0; border-radius: 0 2px 2px 0; background: #fff; font: 9px/19px "Open Sans", sans-serif; text-align: center; color: #333; }
.editor { width: 58px; height: 398px; margin-top: 56px; border: 1px solid #d8dbdf; border-left: 0; border-radius: 0 2px 2px 0; }
.ehead { height: 33px; border-bottom: 1px solid #d8dbdf; background: #fafbfc; padding-top: 6px; }
.wrap { width: 51px; height: 21px; border: 1px solid #cfd2d6; border-left: 0; border-radius: 0 2px 2px 0; background: #fff; font: 9px "Open Sans", sans-serif; color: #24292e; display: flex; align-items: center; letter-spacing: -.2px; }
.wrap .c { color: #6bbfe5; margin-left: -2px; }
.wrap svg { width: 6px; height: 9px; margin: 0 6px 0 auto; }
.ebody { height: 363px; display: flex; padding-top: 6px; }
.code { width: 41px; padding-top: 5px; }
pre { margin: 0; font: 8px/13px "DejaVu Sans Mono", monospace; color: #54585c; height: 26px; }
.p2 { margin-top: 143px; height: 13px; } .p3 { margin-top: 143px; height: 13px; }
.gram { width: 6px; height: 8px; margin: 4px 0 0 32px; }
.esb { width: 16px; background: #f0f0f0; display: flex; flex-direction: column; align-items: center; padding-top: 7px; }
.esb svg { width: 8px; height: 4px; color: #4c4c4c; margin-top: 7px; }
.esb svg.up { transform: rotate(180deg); margin: 0; }
.esb i { width: 13px; height: 21px; background: #c1c1c1; margin-top: 307px; flex: none; }
.commit { width: 58px; height: 210px; margin-top: 12px; border: 1px solid #e1e4e8; border-left: 0; border-radius: 0 2px 2px 0; padding-top: 41px; }
.in1, .in2 { width: 45px; height: 26px; border: 1px solid #cfd3d8; border-left: 0; border-radius: 0 2px 2px 0; background: #fafbfc; }
.in2 { height: 75px; margin-top: 7px; }
.rule { width: 58px; border-top: 1px solid #e1e4e8; margin-top: 62px; }
.fsb { width: 17px; background: #f1f1f1; display: flex; flex-direction: column; align-items: center; padding-top: 7px; }
.fsb svg { width: 8px; height: 4px; color: #a3a3a3; }
.fsb svg.up { transform: rotate(180deg); }
.fsb i { width: 13px; height: 853px; background: #c1c1c1; margin-top: 6px; }

/* hand-drawn marks */
.ink, .marker { position: absolute; left: 0; top: 0; pointer-events: none; }
.ink { fill: none; stroke: #00ffff; stroke-width: 7.500; stroke-linecap: round; stroke-linejoin: round; }
.marker { fill: #ff0; mix-blend-mode: multiply; }
```
